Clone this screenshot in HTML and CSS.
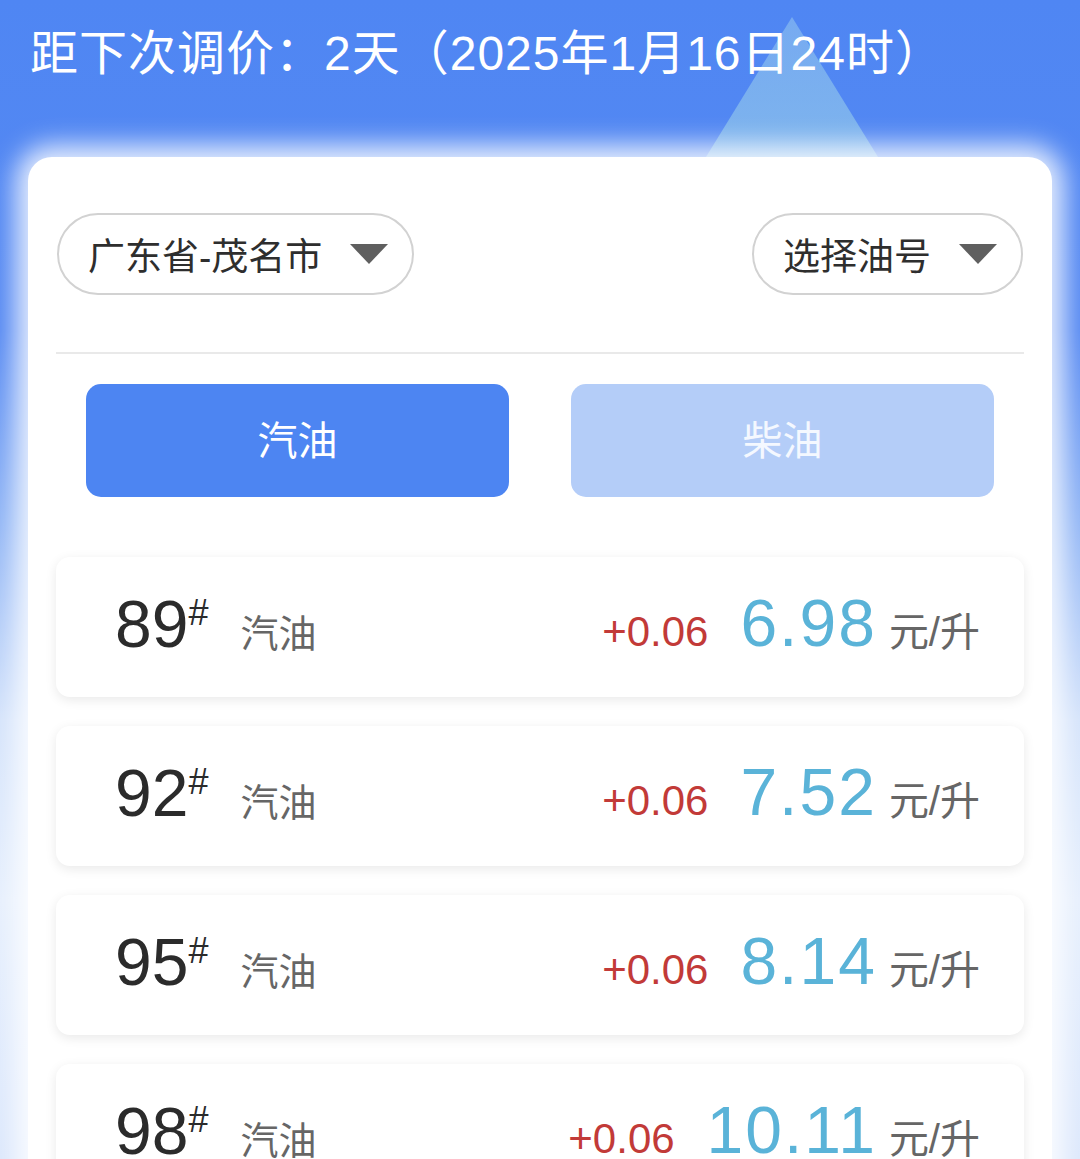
FILE: index.html
```html
<html>

<head>
    <meta charset="utf-8">
    <link rel="stylesheet" href="styles.css">
</head>

<body>

    <div class="page">
        <div class="peak"></div>
        <div class="countdown">距下次调价：2天（2025年1月16日24时）</div>

        <div class="panel">
            <div class="filters">
                <div class="picker">
                    <span>广东省-茂名市</span>
                    <span class="caret"></span>
                </div>
                <div class="picker">
                    <span>选择油号</span>
                    <span class="caret"></span>
                </div>
            </div>

            <div class="tabs">
                <button class="tab active">汽油</button>
                <button class="tab">柴油</button>
            </div>

            <div class="prices">
                <div class="row">
                    <div class="grade"><span class="num">89<sup>#</sup></span><span class="kind">汽油</span></div>
                    <div class="cost"><span class="change">+0.06</span><span class="price">6.98</span><span class="unit">元/升</span></div>
                </div>
                <div class="row">
                    <div class="grade"><span class="num">92<sup>#</sup></span><span class="kind">汽油</span></div>
                    <div class="cost"><span class="change">+0.06</span><span class="price">7.52</span><span class="unit">元/升</span></div>
                </div>
                <div class="row">
                    <div class="grade"><span class="num">95<sup>#</sup></span><span class="kind">汽油</span></div>
                    <div class="cost"><span class="change">+0.06</span><span class="price">8.14</span><span class="unit">元/升</span></div>
                </div>
                <div class="row">
                    <div class="grade"><span class="num">98<sup>#</sup></span><span class="kind">汽油</span></div>
                    <div class="cost"><span class="change">+0.06</span><span class="price">10.11</span><span class="unit">元/升</span></div>
                </div>
            </div>
        </div>
    </div>

</body>

</html>
```

FILE: styles.css
```css
body,
html {
    margin: 0;
    height: 100%;
    width: 100%;
    overflow: hidden;
    font-family: "Liberation Sans", "Noto Sans CJK SC", sans-serif;
    background: linear-gradient(180deg, #4f86f3 0px, #5689f2 330px, #8fb4f5 520px, #d4e3fb 720px, #e6effd 900px, #dbe7fc 1159px);
}

.page {
    position: relative;
    height: 1159px;
}

/* light mountain shape behind the title */
.peak {
    position: absolute;
    left: 706px;
    top: 17px;
    width: 172px;
    height: 140px;
    background: linear-gradient(180deg, rgba(150, 200, 240, 0.55), rgba(140, 195, 235, 0.75));
    clip-path: polygon(50% 0, 100% 100%, 0 100%);
}

.countdown {
    position: relative;
    box-sizing: border-box;
    height: 157px;
    padding: 24px 30px 0px;
    color: #ffffff;
    font-size: 48px;
    line-height: 60px;
    letter-spacing: 1px;
    white-space: nowrap;
}

.panel {
    position: relative;
    margin: 0px 28px;
    padding: 56px 28px 0px;
    background: #ffffff;
    border-radius: 24px 24px 0px 0px;
    box-shadow: 0px 0px 26px 12px rgba(255, 255, 255, 0.85);
    height: 1100px;
}

.filters {
    display: flex;
    justify-content: space-between;
    padding: 0px 1px 57px;
    border-bottom: 2px solid #e9e9e9;
}

.picker {
    display: flex;
    align-items: center;
    gap: 28px;
    height: 78px;
    padding: 0px 24px 0px 29px;
    border: 2px solid #d2d2d2;
    border-radius: 42px;
    font-size: 37px;
    color: #2e2e2e;
}

.caret {
    width: 0;
    height: 0;
    border-left: 19px solid transparent;
    border-right: 19px solid transparent;
    border-top: 20px solid #5f5f5f;
}

.tabs {
    display: flex;
    gap: 62px;
    padding: 30px 30px 0px;
}

.tab {
    flex: 1;
    height: 113px;
    border: none;
    border-radius: 15px;
    background: #b4cdf8;
    color: #f4f8ff;
    font-family: "Noto Sans CJK SC", sans-serif;
    font-size: 40px;
    padding-bottom: 6px;
}

.tab.active {
    background: #4d85f2;
    color: #ffffff;
}

.prices {
    display: flex;
    flex-direction: column;
    gap: 29px;
    padding-top: 60px;
}

.row {
    display: flex;
    justify-content: space-between;
    align-items: center;
    height: 140px;
    padding: 0px 44px 0px 59px;
    border-radius: 14px;
    background: #ffffff;
    box-shadow: 0px 3px 12px rgba(0, 0, 0, 0.09);
}

.grade,
.cost {
    display: flex;
    align-items: baseline;
    padding-bottom: 6px;
}

.num {
    font-size: 66px;
    line-height: 1;
    color: #2b2b2b;
}

.num sup {
    font-size: 36px;
    line-height: 1;
    vertical-align: 22px;
}

.kind {
    margin-left: 32px;
    font-size: 38px;
    color: #666666;
}

.change {
    font-size: 42px;
    color: #c23a38;
}

.price {
    margin-left: 32px;
    font-size: 66px;
    line-height: 1;
    letter-spacing: 2px;
    color: #5ab3d8;
}

.unit {
    margin-left: 12px;
    font-size: 40px;
    color: #666666;
}
```
